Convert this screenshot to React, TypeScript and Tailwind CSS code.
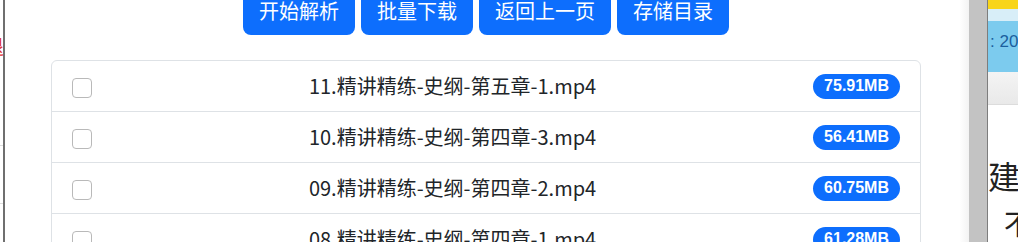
const files = [
  { name: "11.精讲精练-史纲-第五章-1.mp4", size: "75.91MB" },
  { name: "10.精讲精练-史纲-第四章-3.mp4", size: "56.41MB" },
  { name: "09.精讲精练-史纲-第四章-2.mp4", size: "60.75MB" },
  { name: "08.精讲精练-史纲-第四章-1.mp4", size: "61.28MB" },
];

const actions = ["开始解析", "批量下载", "返回上一页", "存储目录"];

const cjk = "font-['Microsoft_YaHei','Noto_Sans_CJK_SC',sans-serif]";

export default function App() {
  return (
    <div className={`flex h-[242px] w-[1018px] overflow-hidden bg-white ${cjk}`}>
      {/* page behind, left edge */}
      <div className="flex w-[3px] shrink-0 flex-col overflow-hidden">
        <div className="mt-[35px] -ml-[16px] whitespace-nowrap text-[20px] leading-[24px] text-[#d33]">退</div>
        <div className="mt-[86px] border-b border-[#ddd]" />
        <div className="mt-[57px] border-b border-[#ddd]" />
      </div>
      <div className="w-[2px] shrink-0 bg-[#6f6f6f]" />

      {/* modal body */}
      <div className="flex flex-1 flex-col bg-gradient-to-r from-white from-[99%] to-[#f3f3f3] pl-[46px]">
        <div className="-mt-[13px] flex w-[870px] justify-center gap-[6px]">
          {actions.map((a) => (
            <button
              key={a}
              className="h-[48px] rounded-lg bg-[#0d6efd] px-4 text-[20px] leading-[30px] text-white"
            >
              {a}
            </button>
          ))}
        </div>

        <div className="mt-[25px] w-[870px] rounded-md border border-[#dee2e6]">
          {files.map((f) => (
            <div key={f.name} className="flex h-[51px] items-center border-b border-[#dee2e6] px-5">
              <span className="mt-1 h-5 w-5 shrink-0 rounded-[4px] border border-[#b9b9b9] bg-white" />
              <span className="flex-1 text-center text-[20px] text-[#212529]">{f.name}</span>
              <span className="flex h-[25px] items-center rounded-full bg-[#0d6efd] px-[11px] font-['Liberation_Sans',sans-serif] text-[16px] font-bold text-white">
                {f.size}
              </span>
            </div>
          ))}
        </div>
      </div>

      {/* backdrop strip */}
      <div className="w-[18px] shrink-0 bg-[#c3c3c3]" />
      <div className="w-px shrink-0 bg-[#7d7d7d]" />

      {/* page behind, right edge */}
      <div className="flex w-[30px] shrink-0 flex-col overflow-hidden whitespace-nowrap">
        <div className="h-[9px] bg-[#f8d51a]" />
        <div className="h-[12px] bg-[#d8eef8]" />
        <div className="flex h-[51px] items-center bg-[#7ccbee] pb-[10px] pl-[2px] font-['Liberation_Sans',sans-serif] text-[17px] text-[#1b5f9e]">
          :&nbsp;20
        </div>
        <div className="h-[33px] border-b border-[#dcdcdc] bg-gradient-to-b from-[#f4f4f4] to-[#e9e9e9]" />
        <div className="mt-[50px] text-[32px] leading-[40px] text-[#222]">建_</div>
        <div className="mt-[12px] pl-[16px] text-[28px] leading-[32px] text-[#222]">不</div>
      </div>
    </div>
  );
}
